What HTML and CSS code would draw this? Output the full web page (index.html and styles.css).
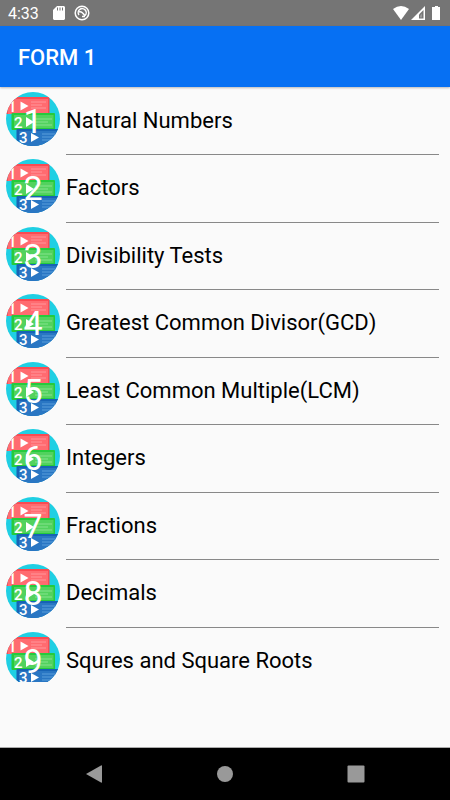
FILE: index.html
```html
<!DOCTYPE html>
<html lang="en">
<head>
<meta charset="utf-8">
<meta name="viewport" content="width=device-width, initial-scale=1">
<title>Form 1</title>
<link rel="stylesheet" href="styles.css">
</head>
<body>
<svg class="defs" aria-hidden="true">
  <defs>
    <clipPath id="disc"><circle cx="27" cy="27" r="27"/></clipPath>
    <symbol id="steps" viewBox="0 0 54 54">
      <g clip-path="url(#disc)">
        <rect width="54" height="54" fill="#1fcfe3"/>
        <rect x="0" y="5" width="43.500" height="17" rx="1" fill="#fa4b52"/>
        <rect x="2" y="7" width="40" height="15" fill="#ff6b70"/>
        <path d="M25 10h15M25 13h11M25 16h15" stroke="#ff979b" fill="none"/>
        <path d="M14.500 9.500l8 4.500-8 4.500z" fill="#fff"/>
        <text class="step" x="2" y="20">1</text>
        <rect x="5.500" y="21" width="43.500" height="17" rx="1" fill="#25cb3c"/>
        <rect x="8" y="23" width="39.500" height="13" fill="#52d25e"/>
        <path d="M29 27h17M29 30h13M29 33h17" stroke="#86e28e" fill="none"/>
        <path d="M20 25l8 5-8 5z" fill="#fff"/>
        <text class="step" x="8" y="36">2</text>
        <rect x="10.500" y="37" width="46" height="18" rx="1" fill="#1763b5"/>
        <rect x="13" y="39" width="42" height="15" fill="#2976c3"/>
        <path d="M36 42h16M36 45h12M36 48h12" stroke="#5b9edb" fill="none"/>
        <path d="M25 41l8 4.500-8 4.500z" fill="#fff"/>
        <text class="step" x="13" y="51">3</text>
      </g>
    </symbol>
  </defs>
</svg>
<div class="screen">
  <div class="status">
    <span class="time">4:33</span>
    <svg class="sd" viewBox="0 0 12 14" aria-hidden="true"><path d="M4 0h7l1 1v12l-1 1H1l-1-1V4z" fill="#fff"/><path d="M4.500 1.500v3M7 1.500v3M9.500 1.500v3" stroke="#757575"/></svg>
    <svg class="dnd" viewBox="0 0 16 16" aria-hidden="true"><g fill="none" stroke="#fff" stroke-width="1.500"><circle cx="8" cy="8" r="6.800"/><path d="M5 10A4 4 0 1 1 11 10.500M5 7q3-1 6 4M8 11.500h3"/></g></svg>
    <svg class="signals" viewBox="0 0 50 16" aria-hidden="true"><path d="M1 4q8-6 16 0L9 15z" fill="#fff"/><path d="M33 1v14H19z" fill="#fff"/><path d="M31.500 5v8.500H27V9.500z" fill="#757575"/><path d="M30 8.500v4h-2v-2z" fill="#999"/><path d="M43 1h3v1h2v13h-8V2h3z" fill="#fff"/></svg>
  </div>
  <header class="bar"><h1>FORM 1</h1></header>
  <main>
    <ul class="topics">
      <li><span class="badge"><svg aria-hidden="true"><use href="#steps"/></svg><b>1</b></span><a href="#">Natural Numbers</a></li>
      <li><span class="badge"><svg aria-hidden="true"><use href="#steps"/></svg><b>2</b></span><a href="#">Factors</a></li>
      <li><span class="badge"><svg aria-hidden="true"><use href="#steps"/></svg><b>3</b></span><a href="#">Divisibility Tests</a></li>
      <li><span class="badge"><svg aria-hidden="true"><use href="#steps"/></svg><b>4</b></span><a href="#">Greatest Common Divisor(GCD)</a></li>
      <li><span class="badge"><svg aria-hidden="true"><use href="#steps"/></svg><b>5</b></span><a href="#">Least Common Multiple(LCM)</a></li>
      <li><span class="badge"><svg aria-hidden="true"><use href="#steps"/></svg><b>6</b></span><a href="#">Integers</a></li>
      <li><span class="badge"><svg aria-hidden="true"><use href="#steps"/></svg><b>7</b></span><a href="#">Fractions</a></li>
      <li><span class="badge"><svg aria-hidden="true"><use href="#steps"/></svg><b>8</b></span><a href="#">Decimals</a></li>
      <li><span class="badge"><svg aria-hidden="true"><use href="#steps"/></svg><b>9</b></span><a href="#">Squres and Square Roots</a></li>
    </ul>
  </main>
  <nav class="nav">
    <button aria-label="Back"><svg viewBox="0 0 18 18"><path d="M1 9L16 0.500q1-.5 1 .5v16q0 1-1 .5z" fill="#999"/></svg></button>
    <button aria-label="Home"><svg viewBox="0 0 18 18"><circle cx="9" cy="9" r="8" fill="#999"/></svg></button>
    <button aria-label="Recent apps"><svg viewBox="0 0 18 18"><rect x="0.500" y="0.500" width="17" height="17" rx="1" fill="#999"/></svg></button>
  </nav>
</div>
</body>
</html>
```
FILE: styles.css
```css
* { box-sizing: border-box; }
body {
  margin: 0;
  font-family: Roboto, "Liberation Sans", sans-serif;
  background: #fafafa;
  color: #000;
}
.defs { position: absolute; width: 0; height: 0; }
.screen { min-height: 100vh; display: flex; flex-direction: column; }
.status {
  height: 26px;
  padding: 0 8px;
  display: flex;
  align-items: center;
  background: #757575;
  color: #fff;
  font-size: 16px;
}
.time { line-height: 26px; padding-top: 1px; }
.sd { width: 12px; height: 14px; margin-left: 14px; }
.dnd { width: 16px; height: 16px; margin-left: 9px; }
.signals { width: 50px; height: 16px; margin-left: auto; }
.bar {
  height: 61px;
  padding: 2px 18px 0;
  display: flex;
  align-items: center;
  background: #0670f3;
  color: #fff;
  box-shadow: 0 1px 2px #0004;
}
h1 { margin: 0; font-size: 22px; font-weight: 500; }
main { flex: 1; }
.topics { list-style: none; margin: 0; padding: 1px 11px 0 6px; }
.topics li { display: flex; gap: 6px; height: 67px; }
.topics li:nth-child(even) { height: 68px; }
.topics li:last-child { height: 54px; overflow: hidden; }
.badge { position: relative; flex: none; width: 54px; height: 54px; margin-top: 4px; }
.badge svg { display: block; width: 54px; height: 54px; }
.step { font-size: 15px; font-weight: 500; fill: #fff; }
.badge b {
  position: absolute;
  inset: 0;
  line-height: 58px;
  text-align: center;
  color: #fff;
  font-size: 34px;
  font-weight: 400;
}
.topics a {
  flex: 1;
  height: 100%;
  border-bottom: 1px solid #888;
  line-height: 66px;
  font-size: 22px;
  color: inherit;
  text-decoration: none;
}
.topics li:last-child a { border: 0; }
.nav {
  height: 53px;
  padding: 0 29px;
  display: flex;
  background: #000;
  border-top: 1px solid #aaa;
}
.nav button {
  flex: 1;
  display: flex;
  align-items: center;
  justify-content: center;
  padding: 0;
  border: 0;
  background: none;
}
.nav svg { width: 18px; height: 18px; }
```
